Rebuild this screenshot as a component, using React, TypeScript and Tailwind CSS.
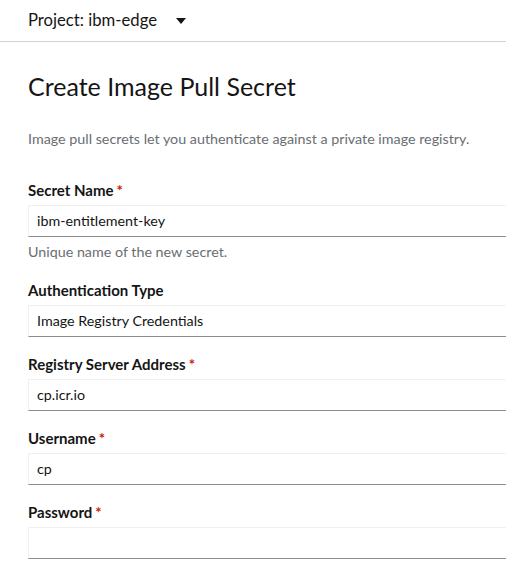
const fields = [
  { label: 'Secret Name', required: true, value: 'ibm-entitlement-key', helper: 'Unique name of the new secret.' },
  { label: 'Authentication Type', required: false, value: 'Image Registry Credentials' },
  { label: 'Registry Server Address', required: true, value: 'cp.icr.io' },
  { label: 'Username', required: true, value: 'cp' },
  { label: 'Password', required: true, value: '' },
]

export default function App() {
  return (
    <div className="w-[506px] h-[567px] bg-white overflow-hidden font-['Lato','Liberation_Sans',sans-serif] text-[#151515]">
      {/* project bar */}
      <div className="h-[42px] border-b border-[#d2d2d2] flex items-center pl-[28px]">
        <span className="text-[16.7px] leading-none">Project: ibm-edge</span>
        <svg className="ml-[19px] mt-[1px]" width="10" height="6" viewBox="0 0 10 6">
          <polygon points="0,0 10,0 5,6" fill="#151515" />
        </svg>
      </div>

      <div className="pl-[28px] pt-[29px]">
        <h1 className="text-[25px] leading-[30px] font-normal">Create Image Pull Secret</h1>
        <p className="mt-[28px] text-[14.3px] leading-[20px] text-[#6a6e73]">
          Image pull secrets let you authenticate against a private image registry.
        </p>

        <div className="mt-[31px] flex flex-col gap-[17px]">
          {fields.map((f) => (
            <div key={f.label}>
              <label className="flex h-[20px] items-center text-[15px] leading-[20px] font-bold mb-[5px]">
                {f.label}
                {f.required && <span className="text-[#c9190b] ml-[3px]">*</span>}
              </label>
              <div className="w-[560px] h-[32px] border border-[#f0f0f0] border-b-[#8a8d90] flex items-center pl-[8px] text-[14.3px]">
                {f.value}
              </div>
              {f.helper && (
                <div className="mt-[4px] text-[14.3px] leading-[22px] text-[#6a6e73]">{f.helper}</div>
              )}
            </div>
          ))}
        </div>
      </div>
    </div>
  )
}
